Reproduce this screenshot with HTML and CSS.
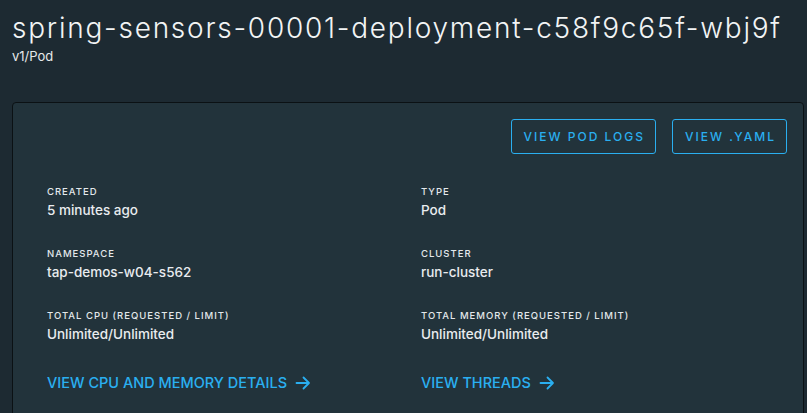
FILE: index.html
```html
<!DOCTYPE html>
<html>
<head>
<meta charset="utf-8">
<link rel="stylesheet" href="styles.css">
</head>
<body>
<header class="page-head">
  <h1 class="title">spring-sensors-00001-deployment-c58f9c65f-wbj9f</h1>
  <div class="subtitle">v1/Pod</div>
</header>
<section class="card">
  <div class="actions">
    <button class="btn">VIEW POD LOGS</button>
    <button class="btn">VIEW .YAML</button>
  </div>
  <div class="grid">
    <div class="field"><div class="label">Created</div><div class="value">5 minutes ago</div></div>
    <div class="field"><div class="label">Type</div><div class="value">Pod</div></div>
    <div class="field"><div class="label">Namespace</div><div class="value">tap-demos-w04-s562</div></div>
    <div class="field"><div class="label">Cluster</div><div class="value">run-cluster</div></div>
    <div class="field"><div class="label">Total CPU (Requested / Limit)</div><div class="value">Unlimited/Unlimited</div></div>
    <div class="field"><div class="label">Total Memory (Requested / Limit)</div><div class="value">Unlimited/Unlimited</div></div>
    <a class="link">VIEW CPU AND MEMORY DETAILS <svg class="arrow" viewBox="0 0 16 16" width="16" height="16"><path d="M1.5 8H14M8.5 2.5L14 8l-5.5 5.5" fill="none" stroke="currentColor" stroke-width="1.8" stroke-linecap="round" stroke-linejoin="round"/></svg></a>
    <a class="link">VIEW THREADS <svg class="arrow" viewBox="0 0 16 16" width="16" height="16"><path d="M1.5 8H14M8.5 2.5L14 8l-5.5 5.5" fill="none" stroke="currentColor" stroke-width="1.8" stroke-linecap="round" stroke-linejoin="round"/></svg></a>
  </div>
</section>
</body>
</html>
```

FILE: styles.css
```css
html, body {
  margin: 0;
  padding: 0;
  background: #1d2a32;
  height: 100%;
  overflow: hidden;
  font-family: Inter, Lato, sans-serif;
  color: #e9ecef;
}
.page-head {
  padding: 10px 12px 0 12px;
}
.title {
  margin: 0;
  font-weight: 300;
  font-size: 28px;
  line-height: 36px;
  letter-spacing: 1.75px;
  color: #f2f4f5;
  white-space: nowrap;
}
.subtitle {
  font-size: 13px;
  line-height: 16px;
  margin-top: 2px;
  color: #e6e9eb;
}
.card {
  margin: 38px 3px 0 12px;
  background: #22333b;
  border: 1px solid #0b1114;
  border-radius: 4px;
  height: 330px;
  box-sizing: border-box;
  padding: 16px 16px 0 34px;
}
.actions {
  display: flex;
  justify-content: flex-end;
  gap: 16px;
}
.btn {
  background: transparent;
  border: 1px solid #2aaff0;
  border-radius: 3px;
  color: #2aaff0;
  font-family: Inter, sans-serif;
  font-weight: 500;
  font-size: 12px;
  letter-spacing: 2px;
  height: 35px;
  padding: 0 10px 0 12px;
}
.grid {
  display: grid;
  grid-template-columns: 374px 1fr;
  row-gap: 29px;
  margin-top: 32px;
}
.label {
  font-size: 9.5px;
  line-height: 12px;
  text-transform: uppercase;
  letter-spacing: 1px;
  font-weight: 500;
  color: #e3e8eb;
}
.value {
  font-size: 13.5px;
  line-height: 18px;
  margin-top: 3px;
  font-weight: 500;
}
.link {
  display: flex;
  align-items: center;
  gap: 8px;
  color: #2aaff0;
  font-size: 14.5px;
  font-weight: 500;
  margin-top: 2px;
}
.arrow { display: block; }
```
